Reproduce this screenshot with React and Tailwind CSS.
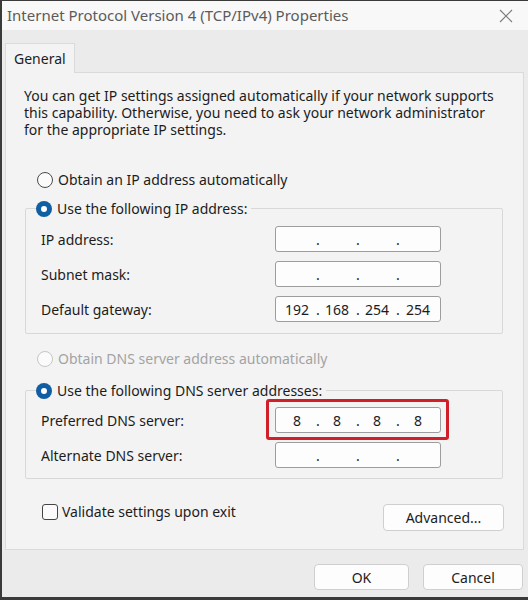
import { useState } from 'react';

const font = "font-['Noto_Sans',_'Open_Sans',_sans-serif]";

function Radio({ checked, disabled, label }) {
  return (
    <div className={`flex items-center gap-[5px] ${disabled ? 'text-[#a3a3a3]' : 'text-[#1c1c1c]'}`}>
      {checked ? (
        <span className="w-[16px] h-[16px] rounded-full bg-[#115ea3] flex items-center justify-center">
          <span className="w-[6px] h-[6px] rounded-full bg-white" />
        </span>
      ) : (
        <span className={`w-[16px] h-[16px] rounded-full border ${disabled ? 'border-[#c6c6c6]' : 'border-[#4a4a4a]'} bg-[#fbfbfb]`} />
      )}
      <span>{label}</span>
    </div>
  );
}

function IpBox({ value, highlight }) {
  const parts = value ? value.split('.') : ['', '', '', ''];
  return (
    <div className="relative w-[166px] h-[26px]">
      <div className="w-full h-full rounded-[3px] border border-[#9d9d9d] bg-[#fdfdfd] flex items-center px-[2px] text-[#1c1c1c]">
        {parts.map((p, i) => (
          <div key={i} className="flex-1 flex items-center">
            <span className="flex-1 text-center">{p}</span>
            {i < 3 && <span className="w-[2px] text-center">.</span>}
          </div>
        ))}
      </div>
      {highlight && (
        <div className="absolute -left-[9px] -right-[8px] -top-[8px] -bottom-[7px] border-[3px] border-[#d11f2a] rounded-[3px]" />
      )}
    </div>
  );
}

function Row({ label, value, highlight }) {
  return (
    <div className="flex items-center justify-between pl-[5px] pr-[51px]">
      <span>{label}</span>
      <IpBox value={value} highlight={highlight} />
    </div>
  );
}

function Button({ children, className = '' }) {
  return (
    <button className={`h-[26px] rounded-[4px] border border-[#cfcfcf] bg-[#fdfdfd] text-[#1c1c1c] text-[14px] ${className}`}>
      {children}
    </button>
  );
}

export default function App() {
  const [validate, setValidate] = useState(false);

  return (
    <div className={`w-[528px] h-[600px] bg-[#ebebeb] border-l-2 border-t border-b-[3px] border-[#3a3a3a] flex flex-col text-[14px] ${font}`}>
      {/* Title bar */}
      <div className="h-[29px] bg-[#f8f8f8] flex items-center justify-between pl-[5px] pr-[14px]">
        <span className="text-[15px] text-[#5b5b5b]">Internet Protocol Version 4 (TCP/IPv4) Properties</span>
        <svg width="16" height="16" viewBox="0 0 16 16" className="text-[#7a7a7a]">
          <path d="M2 2 L14 14 M14 2 L2 14" stroke="currentColor" strokeWidth="1.1" />
        </svg>
      </div>

      <div className="flex-1 flex flex-col pl-[3px] pr-[4px] pt-[13px]">
        {/* Tab */}
        <div className="w-[70px] h-[30px] bg-[#f3f3f3] border border-b-0 border-[#dadada] flex items-center pl-[8px] text-[#1c1c1c] -mb-px relative">
          General
        </div>

        {/* Panel */}
        <div className="h-[478px] border border-[#dadada] bg-[#f3f3f3] pt-[14px] pl-[18px] pr-[18px] text-[#1c1c1c]">
          <p className="leading-[17px] pr-[10px]">
            You can get IP settings assigned automatically if your network supports
            this capability. Otherwise, you need to ask your network administrator
            for the appropriate IP settings.
          </p>

          <div className="mt-[31px] pl-[13px]">
            <Radio label="Obtain an IP address automatically" />
          </div>

          <fieldset className="mt-[8px] ml-[1px] mr-[2px] border border-[#d8d8d8] rounded-[2px] px-[10px] pb-[11px]">
            <legend className="pr-[4px]">
              <Radio checked label="Use the following IP address:" />
            </legend>
            <div className="flex flex-col gap-[9px] mt-[7px]">
              <Row label="IP address:" />
              <Row label="Subnet mask:" />
              <Row label="Default gateway:" value="192.168.254.254" />
            </div>
          </fieldset>

          <div className="mt-[14px] pl-[13px]">
            <Radio disabled label="Obtain DNS server address automatically" />
          </div>

          <fieldset className="mt-[11px] ml-[1px] mr-[2px] border border-[#d8d8d8] rounded-[2px] px-[10px] pb-[10px]">
            <legend className="pr-[4px]">
              <Radio checked label="Use the following DNS server addresses:" />
            </legend>
            <div className="flex flex-col gap-[9px] mt-[6px]">
              <Row label="Preferred DNS server:" value="8.8.8.8" highlight />
              <Row label="Alternate DNS server:" />
            </div>
          </fieldset>

          <div className="mt-[22px] flex items-start justify-between pl-[18px] pr-[1px]">
            <label className="flex items-center gap-[4px] cursor-pointer">
              <span
                onClick={() => setValidate(!validate)}
                className="w-[16px] h-[16px] rounded-[3px] border border-[#454545] bg-[#fbfbfb]"
              />
              <span>Validate settings upon exit</span>
            </label>
            <Button className="w-[121px] h-[27px] mt-[3px]">Advanced...</Button>
          </div>
        </div>

        {/* Bottom buttons */}
        <div className="flex justify-end gap-[14px] mt-[14px] pr-[1px]">
          <Button className="w-[95px]">OK</Button>
          <Button className="w-[100px]">Cancel</Button>
        </div>
      </div>
    </div>
  );
}
